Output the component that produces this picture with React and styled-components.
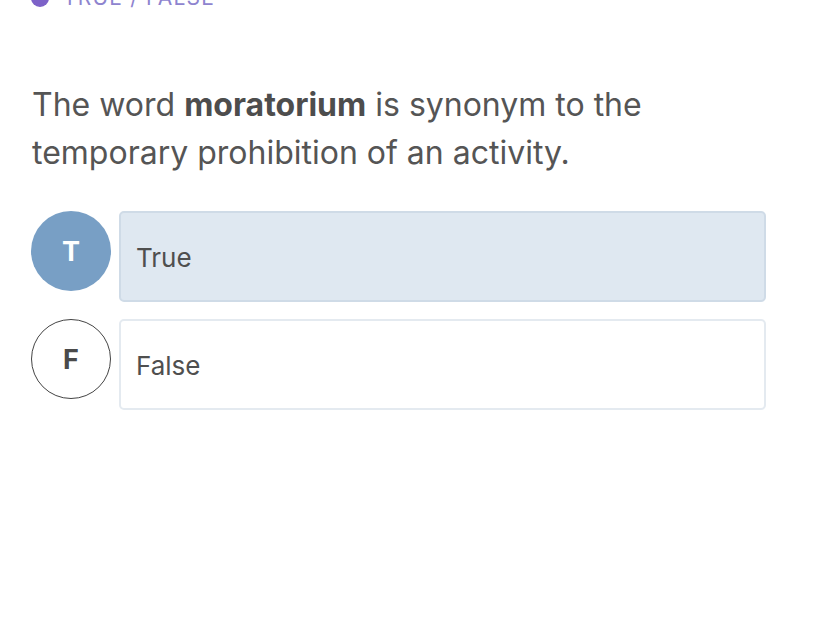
import React from "react";
import styled, { createGlobalStyle } from "styled-components";

const Global = createGlobalStyle`
  html, body { margin: 0; padding: 0; background: #ffffff; }
  body { font-family: Inter, "Noto Sans", sans-serif; -webkit-font-smoothing: antialiased; }
`;

const Page = styled.div`
  padding: 0 60px 0 31px;
  margin-top: -13px;
`;

const Tag = styled.div`
  display: flex;
  align-items: center;
  gap: 14px;
  height: 22px;
`;

const Dot = styled.span`
  width: 18px;
  height: 18px;
  border-radius: 50%;
  background: #7d62c8;
`;

const TagText = styled.span`
  font-size: 21px;
  letter-spacing: 1.2px;
  color: #8e84cf;
  text-transform: uppercase;
  line-height: 22px;
`;

const Question = styled.p`
  margin: 72px 0 0 1px;
  font-size: 32px;
  line-height: 48px;
  color: #555555;
  max-width: 733px;
  b { font-weight: 700; color: #4d4d4d; }
`;

const Options = styled.div`
  display: flex;
  flex-direction: column;
  gap: 17px;
  margin-top: 34px;
`;

const Option = styled.div`
  display: flex;
  align-items: flex-start;
  gap: 8px;
`;

const Letter = styled.div`
  width: 80px;
  height: 80px;
  box-sizing: border-box;
  border-radius: 50%;
  flex: none;
  display: flex;
  align-items: center;
  justify-content: center;
  font-size: 27px;
  font-weight: 700;
  background: ${p => (p.$selected ? "#789fc5" : "#ffffff")};
  color: ${p => (p.$selected ? "#ffffff" : "#4a4a4a")};
  border: ${p => (p.$selected ? "none" : "1.6px solid #444444")};
`;

const Answer = styled.div`
  width: 647px;
  height: 91px;
  box-sizing: border-box;
  border-radius: 5px;
  display: flex;
  align-items: center;
  padding: 2px 0 0 15px;
  font-size: 26px;
  color: #4f4f4f;
  background: ${p => (p.$selected ? "#dfe8f1" : "#ffffff")};
  border: 2px solid ${p => (p.$selected ? "#cfdbe7" : "#e4eaf0")};
`;

const options = [
  { key: "T", label: "True", selected: true },
  { key: "F", label: "False", selected: false },
];

export default function App() {
  return (
    <>
      <Global />
      <Page>
        <Tag>
          <Dot />
          <TagText>True / False</TagText>
        </Tag>
        <Question>
          The word <b>moratorium</b> is synonym to the temporary prohibition of an activity.
        </Question>
        <Options>
          {options.map(o => (
            <Option key={o.key}>
              <Letter $selected={o.selected}>{o.key}</Letter>
              <Answer $selected={o.selected}>{o.label}</Answer>
            </Option>
          ))}
        </Options>
      </Page>
    </>
  );
}
